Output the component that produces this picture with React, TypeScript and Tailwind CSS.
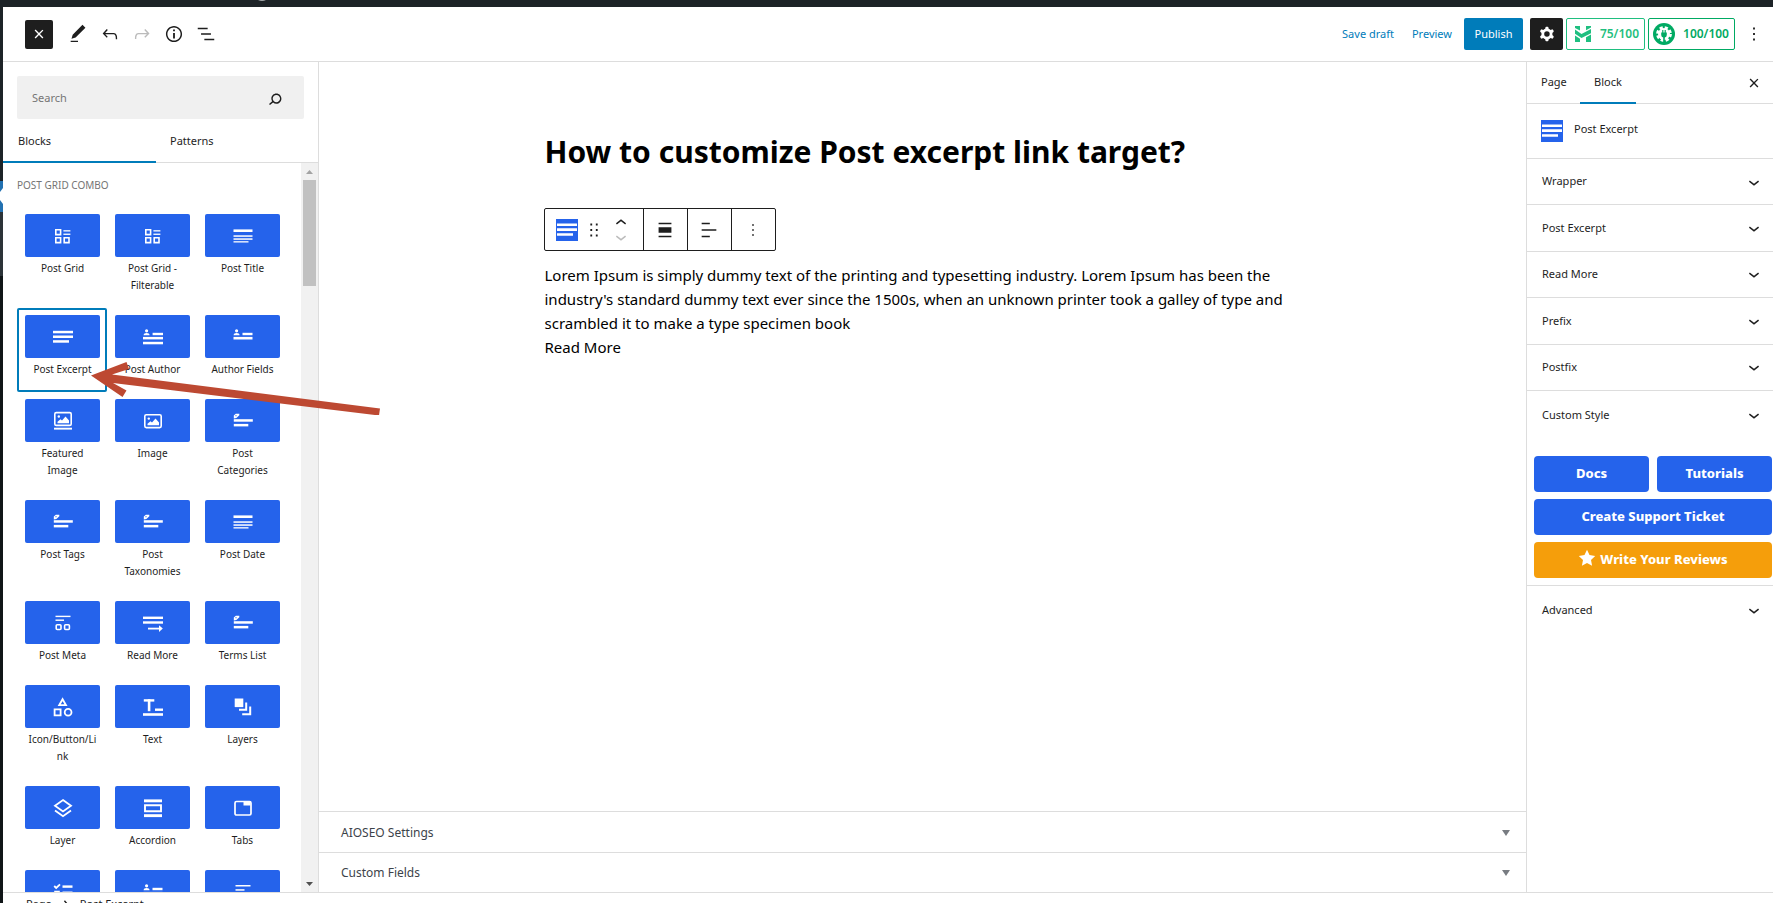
import React from "react";

const paths = {
  close: "M12 13.06l3.712 3.713 1.061-1.06L13.061 12l3.712-3.712-1.06-1.06L12 10.938 8.288 7.227l-1.061 1.06L10.939 12l-3.712 3.712 1.06 1.061L12 13.061z",
  pencil: "M20.1 5.1L16.9 2 6.2 12.7l-1.3 4.4 4.5-1.3L20.1 5.1zM4 20.8h8v-1.5H4v1.5z",
  undo: "M18.3 11.7c-.6-.6-1.4-.9-2.3-.9H6.7l2.9-3.3-1.1-1-4.5 5L8.5 16l1-1-2.7-2.7H16c.5 0 .9.2 1.3.5 1 1 1 3.4 1 4.5v.3h1.5v-.2c0-1.5 0-4.3-1.5-5.7z",
  redo: "M15.6 6.5l-1.1 1 2.9 3.3H8c-.9 0-1.7.3-2.3.9-1.4 1.5-1.4 4.2-1.4 5.6v.2h1.5v-.3c0-1.1 0-3.5 1-4.5.3-.3.7-.5 1.3-.5h9.2L14.5 15l1.1 1.1 4.6-4.6-4.6-5z",
  info: "M12 3.2c-4.8 0-8.8 3.9-8.8 8.8 0 4.8 3.9 8.8 8.8 8.8 4.8 0 8.8-3.9 8.8-8.8 0-4.8-4-8.8-8.8-8.8zm0 16c-4 0-7.2-3.3-7.2-7.2C4.8 8 8 4.8 12 4.8s7.2 3.3 7.2 7.2c0 4-3.2 7.2-7.2 7.2zM11 17h2v-6h-2v6zm0-8h2V7h-2v2z",
  list: "M13.8 5.2H3v1.5h10.8V5.2zm-3.6 12v1.5H21v-1.5H10.2zm7.2-6H6.6v1.5h10.8v-1.5z",
  search: "M13.5 6C10.5 6 8 8.5 8 11.5c0 1.1.3 2.1.9 3l-3.4 3 1 1.1 3.4-2.9c1 .9 2.2 1.4 3.6 1.4 3 0 5.5-2.5 5.5-5.5C19 8.5 16.5 6 13.5 6zm0 9.5c-2.2 0-4-1.8-4-4s1.8-4 4-4 4 1.8 4 4-1.8 4-4 4z",
  cog: "M10.289 4.836A1 1 0 0111.275 4h1.306a1 1 0 01.987.836l.244 1.466c.787.26 1.503.679 2.108 1.218l1.393-.522a1 1 0 011.216.437l.653 1.13a1 1 0 01-.23 1.273l-1.148.944a6.025 6.025 0 010 2.435l1.149.946a1 1 0 01.23 1.272l-.653 1.13a1 1 0 01-1.216.437l-1.394-.522c-.605.54-1.32.958-2.108 1.218l-.244 1.466a1 1 0 01-.987.836h-1.306a1 1 0 01-.986-.836l-.244-1.466a5.995 5.995 0 01-2.108-1.218l-1.394.522a1 1 0 01-1.217-.436l-.653-1.131a1 1 0 01.23-1.272l1.149-.946a6.026 6.026 0 010-2.435l-1.148-.944a1 1 0 01-.23-1.272l.653-1.131a1 1 0 011.217-.437l1.393.522a5.994 5.994 0 012.108-1.218l.244-1.466zM14.929 12a3 3 0 11-6 0 3 3 0 016 0z",
  more: "M13 19h-2v-2h2v2zm0-6h-2v-2h2v2zm0-6h-2V5h2v2z",
  down: "M17.5 11.6L12 16l-5.5-4.4.9-1.2L12 14l4.5-3.6 1 1.2z",
  up: "M6.5 12.4L12 8l5.5 4.4-.9 1.2L12 10l-4.5 3.6-1-1.2z",
  drag: "M8 7h2V5H8v2zm0 6h2v-2H8v2zm0 6h2v-2H8v2zm6-14v2h2V5h-2zm0 8h2v-2h-2v2zm0 6h2v-2h-2v2z",
  alignNone: "M5 15h14V9H5v6zm0 4.8h14v-1.5H5v1.5zM5 4.2v1.5h14V4.2H5z",
  alignText: "M4 19.8h8.9v-1.5H4v1.5zm8.9-15.6H4v1.5h8.9V4.2zm-8.9 7v1.5h16v-1.5H4z",
  crumb: "M10.8622 8.04053L14.2805 12.0286L10.8622 16.0167L9.72327 15.0405L12.3049 12.0286L9.72327 9.01672L10.8622 8.04053Z",
};

function Icon({ name, className = "size-[22px]" }: { name: keyof typeof paths; className?: string }) {
  return (
    <svg viewBox="0 0 24 24" className={`shrink-0 fill-current ${className}`} aria-hidden="true">
      <path d={paths[name]} fillRule="evenodd" />
    </svg>
  );
}

const lines = (...rows: [number, number, number, number][]) =>
  rows.map(([x, y, w, h], i) => <rect key={i} x={x} y={y} width={w} height={h} fill="#fff" stroke="none" />);

const person = <path d="M3.6 2.2a1.6 1.6 0 1 1 0 3.2 1.6 1.6 0 0 1 0-3.2zM.6 8.300c0-1.700 1.200-2.400 3-2.400s3 .7 3 2.400z" fill="#fff" stroke="none" />;

const icons: Record<string, React.ReactNode> = {
  grid: (
    <>
      <path d="M2.8 3.8h4.8v4.8H2.8zM2.8 11.8h4.8v4.8H2.8zM11.200 11.800H16v4.8h-4.8z" />
      {lines([10.4, 4.2, 7, 1.3], [10.4, 7.6, 7, 1.3])}
    </>
  ),
  title: <>{lines([0.5, 3.400, 19, 2.600], [0.5, 9.300, 19, 1.500], [0.5, 12.300, 19, 1.500], [0.5, 15.200, 15, 1.300])}</>,
  excerpt: <>{lines([0, 3.800, 20, 2.500], [0, 8.500, 20, 2.500], [0, 13.200, 16, 2.500])}</>,
  author: <>{person}{lines([9.600, 5.800, 10.400, 2.400], [0, 9.900, 20, 2.500], [0, 14.800, 20, 2.500])}</>,
  fields: <>{person}{lines([9.500, 5.800, 10, 2.400], [0.5, 9.900, 19, 2.600])}</>,
  featured: (
    <>
      <rect x="1.800" y="1.600" width="16.400" height="12.800" rx="1.500" />
      <path d="M4.500 12.200v-1.500l3-2.500 1.500 1.300 3.500-4 3.500 4v2.700z" fill="#fff" stroke="none" />
      <circle cx="5.800" cy="5.500" r="1.200" fill="#fff" stroke="none" />
      {lines([1, 16.700, 18, 1.900])}
    </>
  ),
  image: (
    <>
      <rect x="1.800" y="3.800" width="16.400" height="12.800" rx="1.500" />
      <path d="M4.500 14.300v-1.500l3-2.500 1.500 1.300 3.500-4 3.500 4v2.700z" fill="#fff" stroke="none" />
      <circle cx="5.800" cy="7.600" r="1.200" fill="#fff" stroke="none" />
    </>
  ),
  tag: (
    <>
      <path d="M.8 7.400V4.600l2-1.800h3.500v1.400L3.400 7z" fill="#fff" stroke="none" />
      <circle cx="3" cy="4.700" r=".6" fill="#2563eb" stroke="none" />
      {lines([0.8, 8.200, 19, 2.500], [0.8, 12.900, 14.500, 2.500])}
    </>
  ),
  meta: (
    <>
      {lines([2.500, 2.700, 15, 1.400], [2.500, 6.500, 8.500, 1.400])}
      <rect x="3.200" y="11.700" width="4.800" height="4.800" rx="1" />
      <rect x="11.600" y="11.700" width="4.800" height="4.800" rx="1" />
    </>
  ),
  readmore: (
    <>
      {lines([0, 3.600, 20, 2.400], [0, 8.300, 20, 2.400], [5, 14.700, 12, 1.800])}
      <path d="M16 12.200l3.800 3.400-3.800 3.400z" fill="#fff" stroke="none" />
    </>
  ),
  shapes: (
    <>
      <path d="M9.600 2.200l3.400 6H6.200z" strokeWidth="1.800" />
      <path d="M1.600 12.300h6v6h-6z" strokeWidth="1.800" />
      <circle cx="15.100" cy="15.300" r="3.400" strokeWidth="1.800" />
    </>
  ),
  text: <>{lines([0.8, 2.200, 10.500, 2.400], [4.800, 2.200, 2.600, 12], [12, 11.500, 8, 2.400], [0, 16.200, 20, 2.600])}</>,
  layers: (
    <>
      <path d="M1.700 1.500h8.600v8.600H1.700z" fill="#fff" stroke="none" />
      <path d="M13.200 5.500v7.300H6M17.200 9.500v7.800h-8" strokeWidth="2" />
    </>
  ),
  layer: <path d="M10 2l8 5.700-8 5.700-8-5.700zM2 12.500l8 5.700 8-5.700" strokeWidth="1.800" />,
  accordion: (
    <>
      {lines([1, 1.400, 18, 2.900], [1, 16.200, 18, 2.900])}
      <path d="M2 7.300h16v6H2z" strokeWidth="1.900" />
    </>
  ),
  tabs: (
    <>
      <rect x="2" y="3.500" width="16" height="13.500" rx="1.500" strokeWidth="1.700" />
      {lines([10.500, 3, 7, 4.500])}
    </>
  ),
  check: (
    <>
      <path d="M1.200 4l2 2L7 2.300" strokeWidth="1.800" />
      <path d="M2 9.500h4v4H2z" />
      {lines([9.500, 3.400, 10, 2.400], [9.500, 9.500, 10, 2.400])}
    </>
  ),
  lines: <>{lines([2.500, 3, 15, 1.500], [2.500, 7.200, 9, 1.500], [2.500, 11.400, 15, 1.500])}</>,
};

const blocks: [string, string][] = [
  ["Post Grid", "grid"],
  ["Post Grid - Filterable", "grid"],
  ["Post Title", "title"],
  ["Post Excerpt", "excerpt"],
  ["Post Author", "author"],
  ["Author Fields", "fields"],
  ["Featured Image", "featured"],
  ["Image", "image"],
  ["Post Categories", "tag"],
  ["Post Tags", "tag"],
  ["Post Taxonomies", "tag"],
  ["Post Date", "title"],
  ["Post Meta", "meta"],
  ["Read More", "readmore"],
  ["Terms List", "tag"],
  ["Icon/Button/Link", "shapes"],
  ["Text", "text"],
  ["Layers", "layers"],
  ["Layer", "layer"],
  ["Accordion", "accordion"],
  ["Tabs", "tabs"],
  ["List", "check"],
  ["User Fields", "fields"],
  ["Content", "lines"],
];

function BlockTile({ label, icon }: { label: string; icon: string }) {
  const selected = label === "Post Excerpt";
  const twoLines = label.length > 13;
  return (
    <button
      type="button"
      className={`flex flex-col items-stretch rounded-xs border-2 pt-[5px] pr-[5px] pb-[12px] pl-[6px] ${selected ? "border-[#007cba]" : "border-transparent"}`}
    >
      <span className="flex h-[43px] shrink-0 items-center justify-center rounded-xs bg-[#2563eb]">
        <svg viewBox="0 0 20 20" className="size-5 overflow-visible" fill="none" stroke="#fff" strokeWidth="1.600" aria-hidden="true">
          {icons[icon]}
        </svg>
      </span>
      <span className={`mt-[3px] text-center text-[10px] leading-[17px] text-[#1e1e1e] ${twoLines ? "px-[2px] wrap-anywhere" : "whitespace-nowrap"}`}>
        {label}
      </span>
    </button>
  );
}

function ExcerptBadge() {
  return (
    <svg viewBox="0 0 22 22" className="size-[22px] shrink-0" aria-hidden="true">
      <path d="M0 0h22v22H0z" fill="#2563eb" />
      <path d="M1 4.500h20v2.600H1zM1 9.300h20v2.600H1zM1 14.200h16v2.600H1z" fill="#fff" />
    </svg>
  );
}

function PanelRow({ label, last = false }: { label: string; last?: boolean }) {
  return (
    <button
      type="button"
      className={`flex w-full items-center justify-between pr-2 pl-[15px] text-left ${last ? "h-12" : "border-b border-[#ddd]"}`}
    >
      {label}
      <Icon name="down" />
    </button>
  );
}

function MetaBox({ label }: { label: string }) {
  return (
    <button type="button" className="flex w-full items-center justify-between border-t border-[#ddd] pt-[2px] pr-4 pl-[22px] text-xs text-[#3c434a]">
      {label}
      <svg viewBox="0 0 8 6" className="h-[6px] w-2" aria-hidden="true">
        <path d="M0 0h8L4 6z" fill="#787c82" />
      </svg>
    </button>
  );
}

export default function App() {
  return (
    <div className="relative flex h-screen flex-col overflow-hidden bg-white font-['Noto_Sans','Open_Sans',sans-serif] text-[11px] text-[#1e1e1e]">
      <div className="flex h-[7px] shrink-0 bg-[#1d2327] pl-[258px]">
        <svg viewBox="0 0 8 2" className="h-[2px] w-2" aria-hidden="true">
          <path d="M0 0Q4 2 8 0" fill="#a7aaad" />
        </svg>
      </div>

      <div className="flex min-h-0 flex-1">
        <div className="flex w-[3px] shrink-0 flex-col bg-[#101517]">
          <div className="h-[174px] shrink-0 bg-[#1d2327]" />
          <svg viewBox="0 0 3 31" className="h-[31px] w-[3px] shrink-0" aria-hidden="true">
            <path d="M0 0h3v31H0z" fill="#2271b1" />
            <path d="M3 7v16L0 19v-8z" fill="#fff" />
          </svg>
          <div className="h-16 shrink-0 bg-[#2c3338]" />
        </div>

        <div className="flex min-w-0 flex-1 flex-col">
          <header className="flex h-[55px] shrink-0 items-center border-b border-[#ddd] pr-2 pl-[22px]">
            <button type="button" aria-label="Close inserter" className="flex h-[29px] w-7 items-center justify-center rounded-xs bg-[#1e1e1e] text-white">
              <Icon name="close" />
            </button>
            <div className="ml-[14px] flex gap-[10px]">
              <button type="button" aria-label="Tools"><Icon name="pencil" /></button>
              <button type="button" aria-label="Undo"><Icon name="undo" /></button>
              <button type="button" aria-label="Redo" className="text-[#bbb]"><Icon name="redo" /></button>
              <button type="button" aria-label="Details"><Icon name="info" /></button>
              <button type="button" aria-label="List view"><Icon name="list" /></button>
            </div>
            <div className="ml-auto flex h-8 items-stretch">
              <button type="button" className="mr-[18px] text-[#007cba]">Save draft</button>
              <button type="button" className="mr-3 text-[#007cba]">Preview</button>
              <button type="button" className="mr-[7px] w-[59px] rounded-xs bg-[#007cba] text-white">Publish</button>
              <button type="button" aria-label="Settings" className="mr-[3px] flex w-[33px] items-center justify-center rounded-xs bg-[#1e1e1e] text-white">
                <Icon name="cog" />
              </button>
              <button type="button" className="mr-[3px] flex w-[79px] items-center justify-between rounded-xs border border-[#1fbf80] pr-[5px] pl-2 text-xs font-semibold text-[#1fbf80]">
                <svg viewBox="0 0 16 16" className="size-4" aria-hidden="true">
                  <path d="M0 0h5v4.500L0 2zM11 0h5v1.500l-5 2.700zM0 3.500L6.500 8 16 3v4.200L6.500 12 0 7.800zM0 9.500l5 3.200V16H0zM11 11.200l5-2.700V16h-5z" fill="#1fbf80" />
                </svg>
                75/100
              </button>
              <button type="button" className="mr-2 flex w-[87px] items-center justify-between rounded-xs border border-[#00aa63] pr-[5px] pl-1 text-xs font-semibold text-[#00aa63]">
                <svg viewBox="0 0 22 22" className="size-[22px]" aria-hidden="true">
                  <circle cx="11" cy="11" r="11" fill="#00aa63" />
                  <circle cx="11" cy="11" r="6" fill="#fff" />
                  <circle cx="11" cy="11" r="6.500" fill="none" stroke="#fff" strokeWidth="2.800" strokeDasharray="3.100 2" />
                  <path d="M9.200 7v2.500h-1V12a2.800 2.800 0 0 0 2 2.600V19h1.600v-4.400a2.800 2.800 0 0 0 2-2.600V9.500h-1V7h-1.200v2.500h-1.200V7z" fill="#00aa63" />
                </svg>
                100/100
              </button>
              <button type="button" aria-label="Options"><Icon name="more" /></button>
            </div>
          </header>

          <div className="flex min-h-0 flex-1">
            <aside className="flex w-[316px] shrink-0 flex-col border-r border-[#ddd]">
              <label className="mx-[14px] mt-[14px] flex h-[43px] shrink-0 items-center rounded-xs bg-[#f0f0f0] pt-[2px] pr-[18px] pl-[15px]">
                <input type="text" aria-label="Search" placeholder="Search" className="min-w-0 flex-1 bg-transparent outline-none placeholder:text-[#757575]" />
                <Icon name="search" />
              </label>
              <div role="tablist" className="flex h-11 shrink-0 border-b border-[#ddd]">
                <button type="button" role="tab" aria-selected="true" className="-mb-[1px] w-[153px] border-b-2 border-[#007cba] pt-[2px] pl-[15px] text-left">Blocks</button>
                <button type="button" role="tab" aria-selected="false" className="flex-1 pt-[2px] pl-[14px] text-left">Patterns</button>
              </div>
              <div className="flex min-h-0 flex-1">
                <div className="min-w-0 flex-1 overflow-hidden px-[14px] pt-[13px]">
                  <h2 className="h-[31px] text-[10px] leading-[18px] text-[#757575]">POST GRID COMBO</h2>
                  <div className="grid grid-cols-3">
                    {blocks.map(([label, icon]) => (
                      <BlockTile key={label} label={label} icon={icon} />
                    ))}
                  </div>
                </div>
                <div className="flex w-[17px] shrink-0 flex-col items-center bg-[#f1f1f1]" aria-hidden="true">
                  <svg viewBox="0 0 17 17" className="size-[17px]"><path d="M5 11h7L8.500 7z" fill="#a3a3a3" /></svg>
                  <div className="h-[106px] w-[13px] bg-[#c1c1c1]" />
                  <svg viewBox="0 0 17 17" className="mt-auto size-[17px]"><path d="M5 7h7l-3.500 4z" fill="#505050" /></svg>
                </div>
              </div>
            </aside>

            <main className="flex min-w-0 flex-1 flex-col">
              <div className="mx-auto w-full max-w-[756px] flex-1 pt-[68px] text-black">
                <h1 className="text-[30px] leading-[44px] font-bold">How to customize Post excerpt link target?</h1>
                <div role="toolbar" aria-label="Block tools" className="mt-[34px] -ml-[1px] flex h-[43px] w-fit rounded-xs border border-[#1e1e1e] text-[#1e1e1e]">
                  <div className="flex w-[99px] items-center border-r border-[#1e1e1e] pl-[11px]">
                    <button type="button" aria-label="Post Excerpt"><ExcerptBadge /></button>
                    <button type="button" aria-label="Drag" className="ml-[5px]"><Icon name="drag" /></button>
                    <div className="ml-[5px] flex flex-col">
                      <button type="button" aria-label="Move up" className="flex h-[14px] items-center"><Icon name="up" /></button>
                      <button type="button" aria-label="Move down" className="flex h-[14px] items-center text-[#bbb]"><Icon name="down" /></button>
                    </div>
                  </div>
                  <button type="button" aria-label="Align" className="flex w-11 items-center justify-center border-r border-[#1e1e1e]"><Icon name="alignNone" /></button>
                  <button type="button" aria-label="Align text" className="flex w-11 items-center justify-center border-r border-[#1e1e1e]"><Icon name="alignText" /></button>
                  <button type="button" aria-label="Options" className="flex w-[43px] items-center justify-center"><Icon name="more" className="size-5" /></button>
                </div>
                <p className="mt-3 text-[15px] leading-6">
                  Lorem Ipsum is simply dummy text of the printing and typesetting industry. Lorem Ipsum has been the industry's standard dummy text ever since the 1500s, when an unknown printer took a galley of type and scrambled it to make a type specimen book
                </p>
                <p className="text-[15px] leading-6">Read More</p>
              </div>
              <div className="grid h-[81px] grid-rows-2">
                <MetaBox label="AIOSEO Settings" />
                <MetaBox label="Custom Fields" />
              </div>
            </main>

            <aside className="w-[247px] shrink-0 border-l border-[#ddd]">
              <div className="flex h-[42px] items-stretch border-b border-[#ddd] pr-2">
                <div role="tablist" className="flex">
                  <button type="button" role="tab" aria-selected="false" className="w-[53px] pl-[14px] text-left">Page</button>
                  <button type="button" role="tab" aria-selected="true" className="-mb-[1px] w-14 border-b-2 border-[#007cba]">Block</button>
                </div>
                <button type="button" aria-label="Close settings" className="ml-auto"><Icon name="close" /></button>
              </div>
              <div className="flex h-[55px] items-start gap-[11px] border-b border-[#ddd] pt-4 pl-[14px]">
                <ExcerptBadge />
                <h2 className="leading-[18px]">Post Excerpt</h2>
              </div>
              <div className="grid h-[232px] grid-rows-5">
                <PanelRow label="Wrapper" />
                <PanelRow label="Post Excerpt" />
                <PanelRow label="Read More" />
                <PanelRow label="Prefix" />
                <PanelRow label="Postfix" />
              </div>
              <PanelRow label="Custom Style" last />
              <div className="grid grid-cols-2 gap-x-2 gap-y-[7px] border-b border-[#ddd] pt-[17px] pr-[1px] pb-[7px] pl-[7px] text-[13px] font-extrabold text-white">
                <a href="#docs" className="flex h-9 items-center justify-center rounded-sm bg-[#2563eb]">Docs</a>
                <a href="#tutorials" className="flex h-9 items-center justify-center rounded-sm bg-[#2563eb]">Tutorials</a>
                <a href="#support" className="col-span-2 flex h-9 items-center justify-center rounded-sm bg-[#2563eb]">Create Support Ticket</a>
                <a href="#reviews" className="col-span-2 flex h-9 items-center justify-center gap-1 rounded-sm bg-[#f59e0b]">
                  <svg viewBox="0 0 18 18" className="mb-1 size-[18px]" aria-hidden="true">
                    <path d="M9 .8l2.500 5.300 5.700.8-4.200 4 1.100 5.900L9 14l-5.100 2.800L5 10.900l-4.200-4 5.700-.8z" fill="#fff" />
                  </svg>
                  Write Your Reviews
                </a>
              </div>
              <PanelRow label="Advanced" last />
            </aside>
          </div>

          <footer className="flex h-[11px] shrink-0 items-start gap-[3px] overflow-hidden border-t border-[#ddd] pl-[23px] leading-[22px]">
            <a href="#page">Page</a>
            <Icon name="crumb" />
            <span>Post Excerpt</span>
          </footer>
        </div>
      </div>

      <svg viewBox="0 0 300 60" className="pointer-events-none absolute top-[355px] left-[85px] h-[60px] w-[300px]" aria-hidden="true">
        <path d="M6 20.500L41.500 7l2.500 7-17 5.500 268 34-1 7L28 28l13.500 7.500-4 6.500z" fill="#bd4932" />
      </svg>
    </div>
  );
}
